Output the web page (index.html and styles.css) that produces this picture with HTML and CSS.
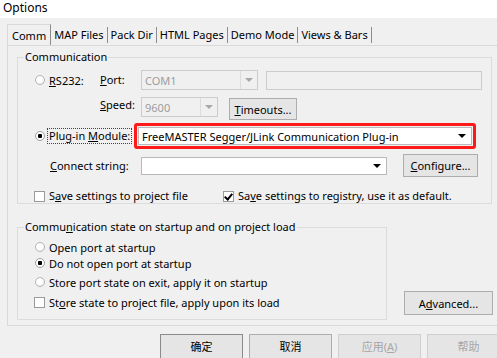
FILE: index.html
```html
<!DOCTYPE html>
<html lang="en">
<head>
  <meta charset="UTF-8" />
  <title>Options</title>
  <link rel="stylesheet" href="styles.css">
</head>
<body>
  <div class="titlebar">Options</div>
  <div class="tabs">
    <div class="tab active">Comm</div>
    <div class="tab">MAP Files</div>
    <div class="tab">Pack Dir</div>
    <div class="tab">HTML Pages</div>
    <div class="tab">Demo Mode</div>
    <div class="tab">Views &amp; Bars</div>
  </div>
  <div class="pane">
    <div class="group group-comm">
      <span class="group-title">Communication</span>
      <div class="row row-rs">
        <div class="opt-col">
          <span class="radio"></span>
          <span><u>R</u>S232:</span>
        </div>
        <span class="field-label"><u>P</u>ort:</span>
        <div class="combo disabled combo-port">
          <span class="combo-text">COM1</span>
          <span class="drop-btn"><span class="tri"></span></span>
        </div>
        <div class="textbox disabled"></div>
      </div>
      <div class="row row-speed">
        <span class="field-label"><u>S</u>peed:</span>
        <div class="combo disabled combo-speed">
          <span class="combo-text">9600</span>
          <span class="drop-btn"><span class="tri"></span></span>
        </div>
        <div class="btn btn-timeouts"><u>T</u>imeouts...</div>
      </div>
      <div class="row row-plugin">
        <span class="radio checked"></span>
        <span class="focus-label">Plug-in <u>M</u>odule:</span>
        <div class="highlight">
          <div class="combo combo-plugin">
            <span class="combo-text">FreeMASTER Segger/JLink Communication Plug-in</span>
            <span class="tri dark"></span>
          </div>
        </div>
      </div>
      <div class="row row-connect">
        <span class="field-label wide"><u>C</u>onnect string:</span>
        <div class="combo combo-connect">
          <span class="combo-text"></span>
          <span class="tri dark"></span>
        </div>
        <div class="btn btn-configure"><u>C</u>onfigure...</div>
      </div>
      <div class="row row-save">
        <div class="check-item first">
          <span class="checkbox"></span>
          <span>S<u>a</u>ve settings to project file</span>
        </div>
        <div class="check-item">
          <span class="checkbox checked"></span>
          <span>Sa<u>v</u>e settings to registry, use it as default.</span>
        </div>
      </div>
    </div>
    <div class="lower">
      <div class="group group-state">
        <span class="group-title">Commu<u>n</u>ication state on startup and on project load</span>
        <div class="opt-row"><span class="radio"></span><span>Open port at startup</span></div>
        <div class="opt-row"><span class="radio checked"></span><span>Do not open port at startup</span></div>
        <div class="opt-row gap3"><span class="radio"></span><span>Store port state on exit, apply it on startup</span></div>
        <div class="opt-row gap4"><span class="checkbox"></span><span>St<u>o</u>re state to project file, apply upon its load</span></div>
      </div>
      <div class="btn btn-advanced">A<u>d</u>vanced...</div>
    </div>
  </div>
  <div class="footer">
    <div class="btn dlg default">确定</div>
    <div class="btn dlg">取消</div>
    <div class="btn dlg off">应用(<u>A</u>)</div>
    <div class="btn dlg off">帮助</div>
  </div>
</body>
</html>
```

FILE: styles.css
```css
body {
  margin: 0;
  width: 497px;
  height: 358px;
  overflow: hidden;
  background: #f0f0f0;
  font-family: "Noto Sans", "Noto Sans CJK SC", sans-serif;
  font-size: 11px;
  color: #000;
}
u { text-underline-offset: 1px; }

.titlebar {
  height: 18px;
  background: #fff;
  padding-left: 3px;
  line-height: 16px;
  font-size: 12px;
}

/* tab strip */
.tabs {
  display: flex;
  margin: 6px 0 0 7px;
  height: 21px;
}
.tab {
  margin: 3px 0 2px;
  padding: 0 3px;
  line-height: 16px;
  border-right: 1px solid #8c8c8c;
}
.tab.active {
  margin: 0;
  padding: 3px 4px 0 4px;
  border-left: 1px solid #d9d9d9;
  border-top: 1px solid #d9d9d9;
}

.pane {
  box-sizing: border-box;
  width: 510px;
  height: 281px;
  margin-left: 7px;
  padding: 11px 0 0 9px;
  border: 1px solid #d9d9d9;
}

/* group boxes */
.group {
  position: relative;
  box-sizing: border-box;
  border: 1px solid #dcdcdc;
}
.group-title {
  position: absolute;
  top: -9px;
  left: 6px;
  padding: 0 1px;
  line-height: 16px;
  background: #f0f0f0;
}
.group-comm {
  width: 475px;
  height: 147px;
  padding: 12px 0 0 17px;
}

.row {
  display: flex;
  align-items: center;
}
.row-rs { height: 20px; }
.row-speed {
  height: 23px;
  margin-top: 7px;
  padding-left: 65px;
  align-items: flex-start;
}
.row-plugin { height: 26px; margin-top: 3px; }
.row-connect { height: 23px; margin-top: 5px; }
.row-save { height: 12px; margin-top: 13px; }

.opt-col {
  width: 65px;
  display: flex;
  align-items: center;
  gap: 4px;
}
.field-label { width: 41px; line-height: 16px; }
.field-label.wide { width: 91px; margin-left: 15px; }

.radio {
  box-sizing: border-box;
  width: 10px;
  height: 10px;
  border-radius: 50%;
  border: 1px solid #b4b4b4;
  background: radial-gradient(circle at 40% 40%, #ffffff 40%, #e6e6e6 100%);
  flex: none;
}
.radio.checked {
  background: radial-gradient(circle, #000 0 2px, #fff 2.5px);
  border-color: #a0a0a0;
}
.checkbox {
  box-sizing: border-box;
  width: 11px;
  height: 11px;
  border: 1px solid #9a9a9a;
  background: #fff;
  flex: none;
  position: relative;
}
.checkbox.checked::after {
  content: "";
  position: absolute;
  left: 2px;
  top: 0;
  width: 3px;
  height: 6px;
  border: solid #000;
  border-width: 0 2px 2px 0;
  transform: rotate(40deg);
}

/* combos & edits */
.combo {
  box-sizing: border-box;
  display: flex;
  align-items: center;
  border: 1px solid #b9b9b9;
  background: #fff;
}
.combo.disabled {
  height: 20px;
  background: #f0f0f0;
  border-color: #cccccc;
  color: #9d9d9d;
}
.combo-text {
  flex: 1;
  padding-left: 3px;
  white-space: nowrap;
  overflow: hidden;
}
.combo-port { width: 117px; }
.combo-speed { width: 77px; }
.drop-btn {
  box-sizing: border-box;
  width: 17px;
  height: 18px;
  border-left: 1px solid #dcdcdc;
  display: flex;
  align-items: center;
  justify-content: center;
}
.tri {
  width: 0;
  height: 0;
  border-left: 4px solid transparent;
  border-right: 4px solid transparent;
  border-top: 4px solid #a8a8a8;
}
.tri.dark {
  border-top-color: #000;
  margin-right: 5px;
}
.textbox {
  box-sizing: border-box;
  width: 216px;
  height: 19px;
  margin-left: 8px;
  border: 1px solid #cccccc;
  background: #f0f0f0;
}

.focus-label {
  box-sizing: border-box;
  width: 85px;
  height: 16px;
  margin-left: 2px;
  line-height: 14px;
  border: 1px dotted #444;
  padding-left: 1px;
  white-space: nowrap;
}
.highlight {
  box-sizing: border-box;
  width: 342px;
  height: 26px;
  margin-left: 2px;
  border: 3px solid #ff1a1a;
  border-radius: 3px;
  padding: 1px;
}
.combo-plugin { height: 18px; }
.combo-connect { width: 246px; height: 18px; }

.btn {
  box-sizing: border-box;
  display: flex;
  align-items: center;
  justify-content: center;
  border: 1px solid #adadad;
  background: #e5e5e5;
  white-space: nowrap;
}
.btn-timeouts {
  width: 68px;
  height: 22px;
  margin: 1px 0 0 11px;
}
.btn-configure {
  width: 75px;
  height: 23px;
  margin-left: 16px;
}

.check-item {
  display: flex;
  align-items: center;
  gap: 4px;
  line-height: 14px;
}
.check-item.first {
  width: 189px;
  margin-left: -1px;
}

/* lower section */
.lower {
  display: flex;
  align-items: flex-end;
  margin-top: 23px;
}
.group-state {
  width: 370px;
  height: 93px;
  padding: 11px 0 0 17px;
}
.opt-row {
  display: flex;
  align-items: center;
  gap: 4px;
  height: 16px;
}
.opt-row.gap3 { margin-top: 3px; }
.opt-row.gap4 { margin-top: 4px; }
.opt-row .checkbox { margin-left: -1px; }
.btn-advanced {
  width: 89px;
  height: 24px;
  margin: 0 0 5px 17px;
}

/* dialog buttons */
.footer {
  display: flex;
  gap: 6px;
  margin: 8px 0 0 160px;
}
.btn.dlg {
  flex: none;
  width: 83px;
  height: 26px;
  padding-bottom: 2px;
}
.btn.default { border-color: #8a8a8a; }
.btn.off {
  color: #a6a6a6;
  border-color: #cfcfcf;
}
```
